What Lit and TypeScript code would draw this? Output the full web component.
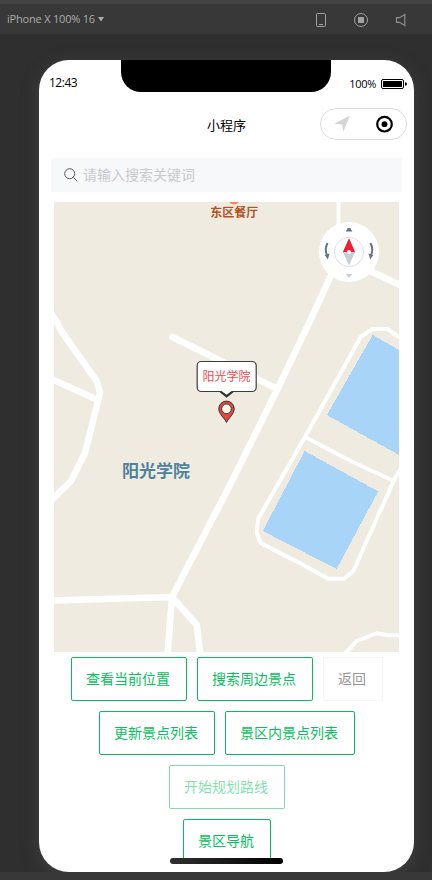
import { LitElement, html, css, svg } from "lit";
import { customElement, property } from "lit/decorators.js";

@customElement("campus-map")
class CampusMap extends LitElement {
  static styles = css`
    :host { display: block; width: 345px; height: 450px; }
    svg { display: block; }
    text { font-family: "Noto Sans CJK SC", sans-serif; }
    .road { fill: none; stroke: #fff; stroke-width: 6.6; stroke-linejoin: round; }
    .thin { stroke-width: 4; stroke-linejoin: miter; }
    .water { fill: #a8d4f7; }
    .place { font-size: 17px; font-weight: 700; fill: #4f8299; stroke: #fff; stroke-width: .8; stroke-opacity: .5; paint-order: stroke; }
    .food { font-size: 12px; font-weight: 700; fill: #b2521f; stroke: #fff; stroke-width: .6; stroke-opacity: .5; paint-order: stroke; }
    .callout { font-size: 12px; fill: #f5484e; }
  `;

  private compass() {
    return svg`
      <circle cx="349" cy="252" r="30" fill="#fff"/>
      <circle cx="349" cy="252" r="14.6" fill="#fff" stroke="#dddfe4"/>
      <path d="M349 238.6L355 252.2H343Z" fill="#f31d35"/>
      <path d="M349 265.4L355 252H343Z" fill="#c9ccd3"/>
      <path d="M349 238.6L355 252.2L349 250.4L343 252.2Z" fill="#f31d35"/>
      <circle cx="349" cy="252" r="2" fill="#fff"/>
      <path d="M345.6 231.6L347.8 228H350.2L352.4 231.6Z" fill="#64748c"/>
      <path d="M345.6 274L349 277.8L352.4 274Z" fill="#c9ccd3"/>
      <g fill="none" stroke="#64748c" stroke-width="2">
        <path d="M327.6 243Q324.2 249 327 255.5"/>
        <path d="M370.4 243Q373.8 249 371 255.5"/>
      </g>
      <path d="M324.8 255L329.6 253.4L327.8 259.4Z" fill="#64748c"/>
      <path d="M373.2 255L368.4 253.4L370.2 259.4Z" fill="#64748c"/>`;
  }

  render() {
    return html`<svg width="345" height="450" viewBox="54 202 345 450">
      <rect x="54" y="202" width="345" height="450" fill="#efebe0"/>
      <path class="water" shape-rendering="crispEdges" d="M372.7 335L400 350.6V455.5L326.8 415Z"/>
      <path class="water" shape-rendering="crispEdges" d="M304.6 451L378.2 491.4L336.6 569L262.8 531Z"/>
      <path class="road thin" d="M338.5 200V240"/>
      <path class="road" d="M349 261L402 286"/>
      <path class="road" d="M338 260L310.5 320L277.5 389L230.5 484L172 597L196.7 625L200.3 655M172 597L167.5 655M172 597L50 600.6"/>
      <path class="road" stroke-linecap="round" d="M172.5 337L277.5 389"/>
      <path class="road" d="M50 312L56 320.5L62 332L97 381.5L100 393L85 453L71 481L51 500.5M50 378.4L98 400"/>
      <path class="road thin" d="M402 339L387.3 329H372.3L360.7 337L305 437L258 519L256.7 533L260.7 543L300 563.2L328.3 578.8H344L353.3 571L393.7 481L402 466M305 437L351.7 461.5L394 481"/>
      <path class="road thin" d="M344 655L356.7 641L376.7 633.2L388 635.3H402"/>
      <circle cx="234" cy="198.4" r="6" fill="#ff8750"/>
      <text class="food" x="210.3" y="217">东区餐厅</text>
      <text class="place" x="122" y="477.4">阳光学院</text>
      ${this.compass()}
      <path d="M218.2 391L226.6 397.8L235 391Z" fill="#303030"/>
      <rect x="197.2" y="361.5" width="59" height="30" rx="4" fill="#fff" stroke="#3c3c3c" stroke-width="1.2"/>
      <path d="M221.8 391.2L226.6 394.8L231.4 391.2V390.4H221.8Z" fill="#fff"/>
      <text class="callout" x="202.4" y="381">阳光学院</text>
      <path d="M226.5 422.4C224.5 418 218.8 414.2 218.8 408.8A7.7 7.7 0 0 1 234.2 408.8C234.2 414.2 228.5 418 226.5 422.4Z" fill="#e7463a" stroke="#2f3238"/>
      <circle cx="226.5" cy="408.8" r="4.8" fill="#fffdf0" stroke="#2f3238" stroke-width=".9"/>
    </svg>`;
  }
}

@customElement("action-button")
class ActionButton extends LitElement {
  @property({ reflect: true }) kind = "primary";
  static styles = css`
    :host {
      box-sizing: border-box; height: 44px; padding: 0 15px 2px 14px; border: 1px solid #07b95f; border-radius: 2px;
      display: flex; align-items: center; justify-content: center; color: #07c160;
      font-size: 14px; line-height: 20px; white-space: nowrap; background: #fff; border-right-width: 1px;
    }
    :host::after { content: ""; width: 1px; }
    :host([kind="disabled"]) { opacity: .5; }
    :host([kind="plain"]) { color: #969696; border-color: #f5f5f5; }
  `;
  render() { return html`<slot></slot>`; }
}

@customElement("app-root")
class AppRoot extends LitElement {
  static styles = css`
    :host {
      display: flex; flex-direction: column; box-sizing: border-box; width: 432px; height: 880px; overflow: hidden;
      background: #2f2f2f; border-bottom: 8px solid #383838;
      font-family: "Noto Sans CJK SC", sans-serif;
    }
    svg { display: block; }
    .toolbar {
      box-sizing: border-box; height: 34px; flex: none; border-top: 4px solid #434343; background: #383838;
      display: flex; align-items: center; padding: 0 25px 0 7px; color: #adadad;
      font: 11px "Open Sans", "Noto Sans", sans-serif;
    }
    .device { flex: 1; display: flex; align-items: center; gap: 3px; white-space: nowrap; letter-spacing: -.2px; margin-top: -1px; }
    .device svg { margin-top: 2px; }
    .tools { display: flex; align-items: center; gap: 26px; padding-top: 2px; }
    .phone {
      width: 375px; height: 812px; margin: 26px 0 0 39px; flex: none; border-radius: 30px; background: #fff;
      overflow: hidden; position: relative; display: flex; flex-direction: column; box-shadow: 0 4px 16px #414141;
    }
    .status { height: 44px; flex: none; display: flex; justify-content: space-between; position: relative; color: #000; font-family: "Open Sans", "Noto Sans", sans-serif; }
    .time { font-size: 12px; line-height: 16px; padding: 15px 0 0 10px; letter-spacing: -.5px; }
    .notch { position: absolute; left: 82px; top: 0; width: 210px; height: 32px; background: #000; border-radius: 0 0 20px 20px; }
    .power { display: flex; gap: 5px; align-items: center; height: 16px; padding: 16px 7px 0 0; font-size: 11px; letter-spacing: -.3px; }
    .power span { margin-top: -1px; }
    .nav { height: 44px; flex: none; display: grid; grid-template-columns: 1fr auto 1fr; align-items: center; font-size: 13px; line-height: 20px; color: #000; }
    .title { grid-column: 2; margin-top: -2px; }
    .capsule { justify-self: end; margin: -4px 7px 0 0; box-sizing: border-box; width: 87px; height: 32px; border: 1px solid #dcdcdc; border-radius: 16px; display: flex; align-items: center; justify-content: space-between; padding: 0 12px 0 12px; }
    .search { height: 34px; flex: none; margin: 10px 12px; box-sizing: border-box; padding: 0 12px; background: #f7f8fa; border-radius: 2px; display: flex; align-items: center; gap: 4px; color: #c8c9cc; font-size: 14px; line-height: 20px; }
    .search span { margin-top: -2px; }
    .map { margin: 0 15px; flex: none; }
    .actions { flex: none; padding-top: 5px; display: flex; flex-direction: column; gap: 10px; }
    .row { display: flex; justify-content: center; gap: 10px; padding-left: 1px; }
    .home { position: absolute; left: 131px; bottom: 8px; width: 113px; height: 6px; border-radius: 3px; background: linear-gradient(90deg, #303030, #000); }
  `;

  private rows = [
    [["查看当前位置", "primary"], ["搜索周边景点", "primary"], ["返回", "plain"]],
    [["更新景点列表", "primary"], ["景区内景点列表", "primary"]],
    [["开始规划路线", "disabled"]],
    [["景区导航", "primary"]],
  ];

  render() {
    return html`
      <div class="toolbar">
        <div class="device"><span>iPhone X 100% 16</span><svg width="6" height="5"><path d="M0 0H6L3 4.5Z" fill="#adadad"/></svg></div>
        <div class="tools">
          <svg width="12" height="16" fill="none" stroke="#a2a2a2"><rect x="1.5" y="1.5" width="9" height="13" rx="1"/><path d="M4 12.5H8"/></svg>
          <svg width="16" height="16"><circle cx="8" cy="8" r="6.5" fill="none" stroke="#a2a2a2"/><rect x="5" y="5" width="6" height="6" rx=".5" fill="#a2a2a2"/></svg>
          <svg width="12" height="16" fill="none" stroke="#909090" stroke-width="1.2"><path d="M1.5 5.7H4.5L9.8 2.5V13.5L4.5 10.3H1.5Z"/></svg>
        </div>
      </div>
      <div class="phone">
        <div class="status">
          <div class="time">12:43</div>
          <div class="notch"></div>
          <div class="power"><span>100%</span><svg width="26" height="10"><rect x=".5" y=".5" width="22" height="9" rx="1.5" fill="none" stroke="#000"/><rect x="2" y="2" width="19" height="6" rx=".5"/><path d="M24 3.2Q26 3.5 26 5T24 6.8Z"/></svg></div>
        </div>
        <div class="nav">
          <div class="title">小程序</div>
          <div class="capsule">
            <svg width="18" height="18"><path d="M1 8.7L17 .8L10.2 16.8L9.2 9.6Z" fill="#d4d4d4"/></svg>
            <svg width="20" height="18"><circle cx="10.5" cy="9.2" r="7.3" fill="none" stroke="#000" stroke-width="2.2"/><circle cx="10.5" cy="9.2" r="2.9"/></svg>
          </div>
        </div>
        <div class="search">
          <svg width="16" height="16" fill="none" stroke="#55565a"><circle cx="6.7" cy="6.7" r="5"/><path d="M10.3 10.3L14.3 14.3"/></svg>
          <span>请输入搜索关键词</span>
        </div>
        <campus-map class="map"></campus-map>
        <div class="actions">
          ${this.rows.map(r => html`<div class="row">${r.map(([label, kind]) => html`<action-button kind=${kind}>${label}</action-button>`)}</div>`)}
        </div>
        <div class="home"></div>
      </div>`;
  }
}
